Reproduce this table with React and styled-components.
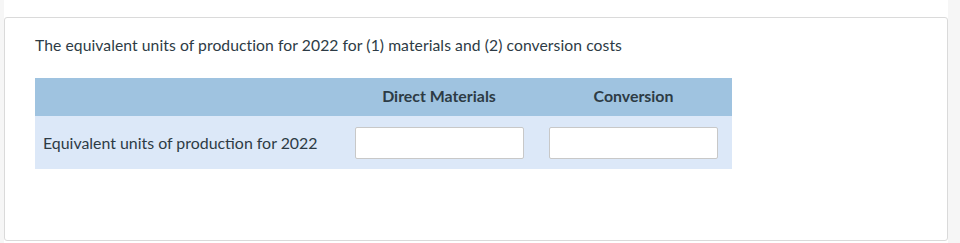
import React from 'react'
import styled, {createGlobalStyle} from 'styled-components'

const GlobalStyle = createGlobalStyle`
  html, body {
    margin: 0;
    padding: 0;
    background: #f6f6f6;
  }
  body {
    font-family: Lato, "Open Sans", sans-serif;
    color: #2d3b45;
  }
`

const Page = styled.div`
  margin-left: 4px;
  width: 944px;
  height: 243px;
  background: #fff;
  padding-top: 17px;
  box-sizing: border-box;
`

const Card = styled.div`
  height: 224px;
  box-sizing: border-box;
  border: 1px solid #dadada;
  border-radius: 3px;
  padding: 17px 30px 0 30px;
`

const Prompt = styled.p`
  margin: 0 0 23px 0;
  font-size: 15.7px;
  letter-spacing: 0.07px;
  line-height: 20px;
  color: #2d3b45;
`

const Table = styled.table`
  border-collapse: collapse;
  width: 697px;
  font-size: 15.9px;
`

const HeadRow = styled.tr`
  background: #9fc3e0;
  height: 38px;
`

const Th = styled.th`
  font-weight: 700;
  text-align: center;
  padding: 0 0 3px 0;
  width: ${p => p.w}px;
`

const BodyRow = styled.tr`
  background: #dce8f8;
  height: 53px;
`

const Label = styled.td`
  padding: 0 0 0 8px;
  color: #2d3b45;
`

const Cell = styled.td`
  padding: 0;
  text-align: center;
`

const Field = styled.input`
  width: 169px;
  height: 32px;
  box-sizing: border-box;
  border: 1px solid #c8c8c8;
  border-radius: 2px;
  background: #fff;
  outline: none;
  display: block;
  margin: 0 auto;
`

function App() {
  return (
    <>
      <GlobalStyle />
      <Page>
        <Card>
          <Prompt>The equivalent units of production for 2022 for (1) materials and (2) conversion costs</Prompt>
          <Table>
            <thead>
              <HeadRow>
                <Th w={308}></Th>
                <Th w={192}>Direct Materials</Th>
                <Th w={197}>Conversion</Th>
              </HeadRow>
            </thead>
            <tbody>
              <BodyRow>
                <Label>Equivalent units of production for 2022</Label>
                <Cell><Field type="text" /></Cell>
                <Cell><Field type="text" /></Cell>
              </BodyRow>
            </tbody>
          </Table>
        </Card>
      </Page>
    </>
  )
}

export default App
